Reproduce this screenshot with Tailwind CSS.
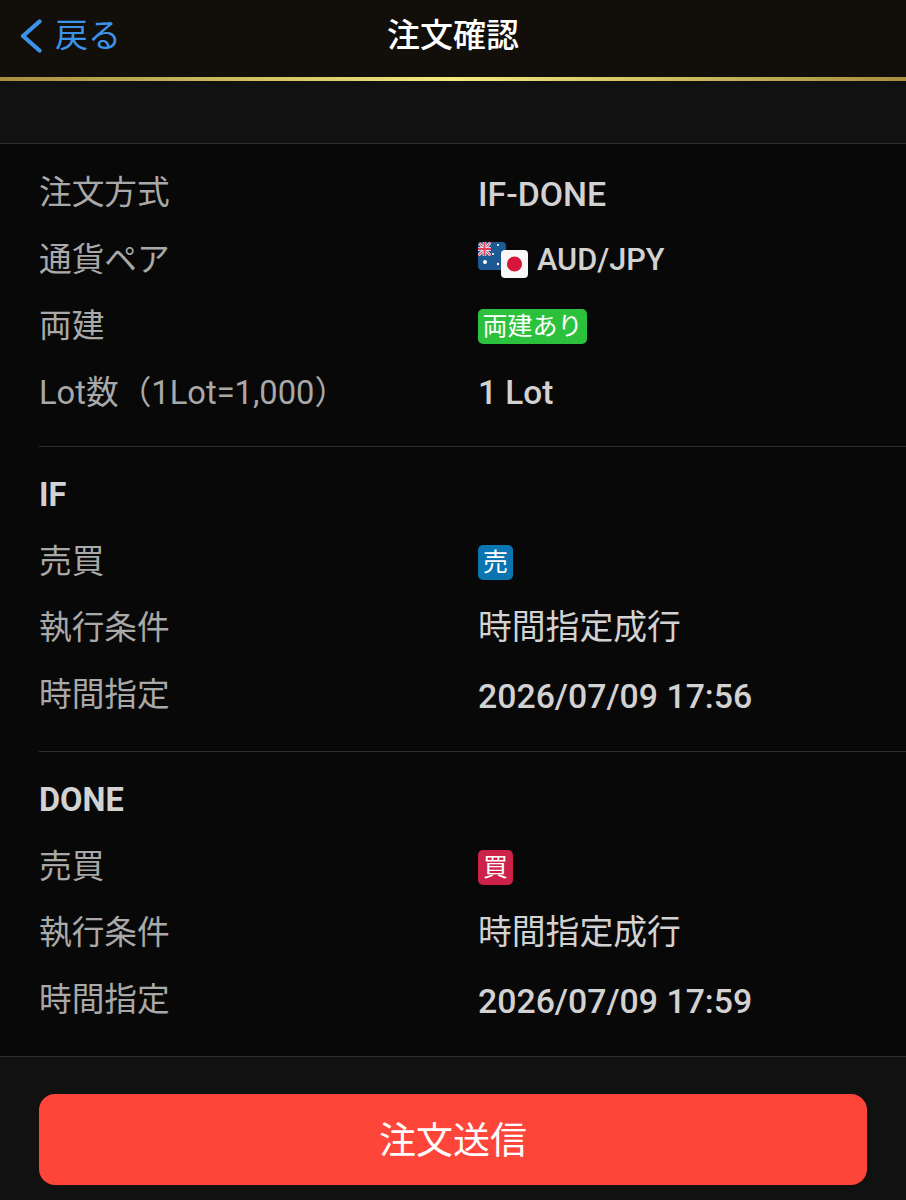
<!DOCTYPE html>
<html lang="ja"><head><meta charset="utf-8"><script src="https://cdn.jsdelivr.net/npm/@tailwindcss/browser@4"></script></head>
<body class="m-0 bg-[#080808]">
<div class="w-[906px] h-[1200px] overflow-hidden flex flex-col bg-[#080808] font-['Roboto','Noto_Sans_CJK_JP',sans-serif] text-[#d2d2d2]">
  <header class="h-[77px] shrink-0 bg-[#120e0a] flex items-center relative pb-[6px]">
    <div class="flex items-center pl-[20px] text-[#3b93ea]">
      <svg width="22" height="34" viewBox="0 0 22 34" fill="none" stroke="currentColor" stroke-width="4.2" stroke-linecap="round" stroke-linejoin="round"><path d="M19.5 2.5 L3 17 L19.5 31.5"/></svg>
      <span class="text-[33px] ml-[13px] leading-none">戻る</span>
    </div>
    <h1 class="absolute inset-x-0 text-center text-[33px] font-medium text-white leading-none">注文確認</h1>
  </header>
  <div class="h-[4px] shrink-0 bg-gradient-to-r from-[#a68f3f] via-[#f6e87f] to-[#a68f3f]"></div>
  <div class="h-[63px] shrink-0 bg-[#101110] border-b border-[#2e2e2e]"></div>

  <main class="flex-1 min-h-0 pl-[39px]">
    <section class="h-[303px] pt-[16px] border-b border-[#2e2e2e]">
      <div class="h-[66.7px] flex items-center"><span class="w-[439px] text-[32.7px] text-[#a9a9a9]">注文方式</span><span class="text-[33.8px] font-medium pt-[4px]">IF-DONE</span></div>
      <div class="h-[66.7px] flex items-center"><span class="w-[439px] text-[32.7px] text-[#a9a9a9]">通貨ペア</span>
        <svg width="50" height="38" viewBox="0 0 50 38" class="mr-[9px] mt-[2px]">
          <defs><clipPath id="au"><rect x="0" y="0" width="28" height="28" rx="4"/></clipPath><clipPath id="uj"><rect x="0" y="0" width="13" height="14"/></clipPath></defs>
          <g clip-path="url(#au)"><rect width="28" height="28" fill="#1c5a94"/><rect width="13" height="14" fill="#2a4d8f"/>
            <g clip-path="url(#uj)"><path d="M0 0L13 14M13 0L0 14" stroke="#f3f3f3" stroke-width="2.8"/><path d="M0 0L13 14M13 0L0 14" stroke="#e0405a" stroke-width="1.1"/><path d="M6.5 0V14M0 7H13" stroke="#f3f3f3" stroke-width="3.6"/><path d="M6.5 0V14M0 7H13" stroke="#e0405a" stroke-width="2"/></g>
            <circle cx="7" cy="20" r="2" fill="#fff"/><circle cx="20" cy="3" r="1.1" fill="#fff"/><circle cx="25" cy="11" r="1.1" fill="#fff"/><circle cx="15" cy="12" r="1.1" fill="#fff"/><circle cx="20" cy="22" r="1.2" fill="#fff"/></g>
          <rect x="23" y="8" width="27" height="28" rx="4" fill="#f8f8f8"/><circle cx="36.5" cy="22" r="7.6" fill="#d8163a"/>
        </svg>
        <span class="text-[30.7px] font-medium">AUD/JPY</span></div>
      <div class="h-[66.7px] flex items-center"><span class="w-[439px] text-[32.7px] text-[#a9a9a9]">両建</span><span class="h-[35px] w-[109px] rounded-[5px] bg-[#2cc13c] text-white text-[25px] flex items-center justify-center leading-none">両建あり</span></div>
      <div class="h-[66.7px] flex items-center"><span class="w-[439px] text-[32.7px] text-[#a9a9a9] whitespace-nowrap">Lot数（1Lot=1,000）</span><span class="text-[33.4px] font-medium">1 Lot</span></div>
    </section>
    <section class="h-[305px] pt-[14px] border-b border-[#2e2e2e]">
      <div class="h-[67.7px] flex items-center text-[32.5px] font-bold"><span class="pt-[2px]">IF</span></div>
      <div class="h-[66.7px] flex items-center"><span class="w-[439px] text-[32.7px] text-[#a9a9a9]">売買</span><span class="size-[35px] rounded-[5px] bg-[#0a75b0] text-white text-[25px] flex items-center justify-center leading-none">売</span></div>
      <div class="h-[66.7px] flex items-center"><span class="w-[439px] text-[32.7px] text-[#a9a9a9]">執行条件</span><span class="text-[33.8px]">時間指定成行</span></div>
      <div class="h-[66.7px] flex items-center"><span class="w-[439px] text-[32.7px] text-[#a9a9a9]">時間指定</span><span class="text-[33.8px] font-medium pt-[3px]">2026/07/09 17:56</span></div>
    </section>
    <section class="h-[304px] pt-[14px]">
      <div class="h-[67.7px] flex items-center text-[32.5px] font-bold"><span class="pt-[2px]">DONE</span></div>
      <div class="h-[66.7px] flex items-center"><span class="w-[439px] text-[32.7px] text-[#a9a9a9]">売買</span><span class="size-[35px] rounded-[5px] bg-[#cc2149] text-white text-[25px] flex items-center justify-center leading-none">買</span></div>
      <div class="h-[66.7px] flex items-center"><span class="w-[439px] text-[32.7px] text-[#a9a9a9]">執行条件</span><span class="text-[33.8px]">時間指定成行</span></div>
      <div class="h-[66.7px] flex items-center"><span class="w-[439px] text-[32.7px] text-[#a9a9a9]">時間指定</span><span class="text-[33.8px] font-medium pt-[3px]">2026/07/09 17:59</span></div>
    </section>
  </main>

  <footer class="h-[144px] shrink-0 bg-[#101110] border-t border-[#2e2e2e] px-[39px] pt-[37px]">
    <button class="w-full h-[91px] pt-[4px] rounded-[16px] bg-[#fe453a] text-white text-[37px] leading-none">注文送信</button>
  </footer>
</div>
</body></html>
